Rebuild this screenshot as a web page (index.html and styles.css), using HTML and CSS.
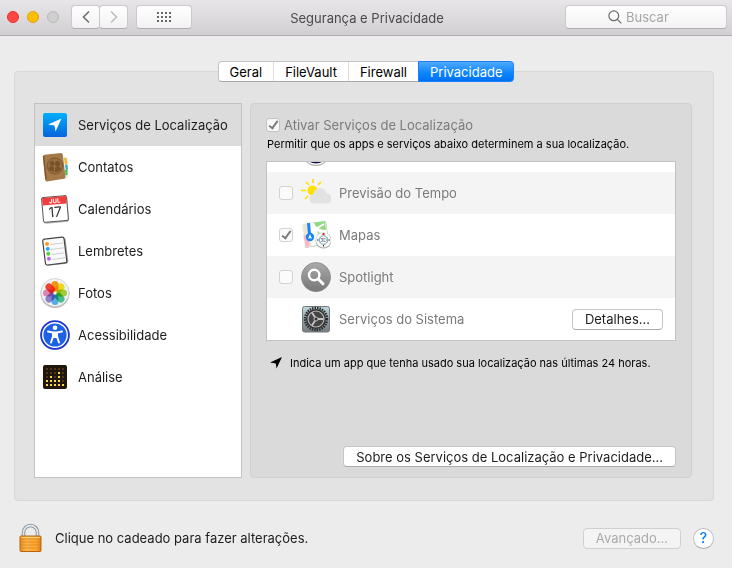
FILE: index.html
```html
<!DOCTYPE html>
<html lang="pt-BR">
<head>
	<meta charset="UTF-8">
	<meta name="viewport" content="width=device-width, initial-scale=1">
	<title>Segurança e Privacidade</title>
	<link rel="stylesheet" href="styles.css">
</head>
<body>

<header class="toolbar">
	<div class="toolbar-left">
		<div class="lights">
			<button type="button" class="light red" aria-label="Fechar"></button>
			<button type="button" class="light yellow" aria-label="Minimizar"></button>
			<button type="button" class="light off" aria-label="Zoom" disabled></button>
		</div>
		<div class="history">
			<button type="button" class="tool" aria-label="Voltar">
				<svg width="8" height="14" viewBox="0 0 8 14"><path d="M7 1.500 1.500 7 7 12.500" fill="none" stroke="#6e6e6e" stroke-width="1.600"/></svg>
			</button>
			<button type="button" class="tool" aria-label="Avançar" disabled>
				<svg width="8" height="14" viewBox="0 0 8 14"><path d="M1 1.500 6.500 7 1 12.500" fill="none" stroke="#bdbdbd" stroke-width="1.600"/></svg>
			</button>
		</div>
		<button type="button" class="tool all" aria-label="Mostrar tudo">
			<svg width="14" height="10" viewBox="0 0 14 10" fill="#666"><path d="M0 0h2v2H0zM4 0h2v2H4zM8 0h2v2H8zM12 0h2v2h-2zM0 4h2v2H0zM4 4h2v2H4zM8 4h2v2H8zM12 4h2v2h-2zM0 8h2v2H0zM4 8h2v2H4zM8 8h2v2H8zM12 8h2v2h-2z"/></svg>
		</button>
	</div>
	<h1 class="title">Segurança e Privacidade</h1>
	<label class="search">
		<svg width="14" height="14" viewBox="0 0 14 14" fill="none" stroke="#6c6c6c" stroke-width="1.200"><circle cx="5.800" cy="5.800" r="4.900"/><path d="m9.300 9.300 4 4"/></svg>
		<input type="text" placeholder="Buscar" aria-label="Buscar">
	</label>
</header>

<main>
	<nav class="tabs">
		<button type="button" class="tab">Geral</button>
		<button type="button" class="tab">FileVault</button>
		<button type="button" class="tab">Firewall</button>
		<button type="button" class="tab active">Privacidade</button>
	</nav>

	<section class="panel">
		<nav class="sidebar">
			<a href="#localizacao" class="item selected">
				<svg class="icon" viewBox="0 0 30 30">
					<defs><linearGradient id="blue" x2="0" y2="1"><stop offset="0" stop-color="#02b0fc"/><stop offset="1" stop-color="#0863dd"/></linearGradient></defs>
					<rect x="3" y="3" width="24" height="24" rx="2" fill="url(#blue)"/>
					<path d="m21.500 8.500-6 13-1-6-6.500-1z" fill="#fff"/>
				</svg>
				Serviços de Localização
			</a>
			<a href="#contatos" class="item">
				<svg class="icon" viewBox="0 0 30 30">
					<path d="m23 4 4 1 1 21-5 1z" fill="#eee"/>
					<path d="M24 6h2.500l1 6-2.500 1z" fill="#f2b52b"/>
					<path d="m25 13 2.500-.5.500 5-2 .5z" fill="#2daed7"/>
					<path d="m25 18 2.500-.5V23l-2 .5z" fill="#4ab84f"/>
					<path d="M3 4.500Q3 3 4.500 2.700L21 1q1.500 0 1.700 1.500L25.500 25q0 1.500-1.500 1.700L7 29.500q-1.500 0-1.800-1.500z" fill="#a47a49"/>
					<path d="m3.500 4 2.500 23" stroke="#805829" stroke-width="1.500"/>
					<circle cx="15" cy="14" r="8" fill="#98703f" stroke="#80592e"/>
					<g fill="#76522b"><circle cx="12" cy="11.500" r="2.400"/><circle cx="17.500" cy="11.500" r="2.600"/><path d="M8.500 17q1-3 3.500-3l2 1.500v4q-4 0-5.500-2.500zM15 20v-3q0-2.500 2.500-2.700 3 .2 3.700 2.700-2 3-6.200 3z"/></g>
				</svg>
				Contatos
			</a>
			<a href="#calendarios" class="item">
				<svg class="icon" viewBox="0 0 30 30">
					<g transform="rotate(-5 15 15)">
						<rect x="3" y="4" width="25" height="25" rx="2" fill="#bbb"/>
						<rect x="2.500" y="2.500" width="25" height="25" rx="2" fill="#fff" stroke="#555"/>
						<path d="M3 4q0-1 1-1h22q1 0 1 1v6.500H3z" fill="#f03d3d"/>
						<text x="15.500" y="9" class="month">JUL</text>
						<text x="15" y="23" class="day">17</text>
					</g>
				</svg>
				Calendários
			</a>
			<a href="#lembretes" class="item">
				<svg class="icon" viewBox="0 0 30 30">
					<g transform="rotate(-7 15 15)">
						<rect x="5" y="3" width="22" height="26" rx="2" fill="#aaa"/>
						<rect x="4" y="2" width="21.500" height="26" rx="2" fill="#fafafa" stroke="#454545" stroke-width="1.200"/>
						<path d="M11 8h13M11 13h13M11 18h13M11 23h13" stroke="#c7c7c7" stroke-width=".8"/>
						<circle cx="8" cy="7" r="2" fill="#ff9817"/><circle cx="8" cy="12" r="2" fill="#1eaff5"/><circle cx="8" cy="17" r="2" fill="#57cf3f"/><circle cx="8" cy="22" r="2" fill="#bd6ae0"/>
					</g>
				</svg>
				Lembretes
			</a>
			<a href="#fotos" class="item">
				<svg class="icon" viewBox="0 0 30 30">
					<circle cx="15" cy="15.500" r="14.500" fill="#b5b5b5"/>
					<circle cx="15" cy="14.500" r="14" fill="#f2f2f2" stroke="#ccc" stroke-width=".8"/>
					<g class="petals">
						<rect x="11.500" y="3" width="7" height="10.500" rx="3.500" fill="#ff9d18"/>
						<rect x="11.500" y="3" width="7" height="10.500" rx="3.500" fill="#f9e51c" transform="rotate(45 15 15)"/>
						<rect x="11.500" y="3" width="7" height="10.500" rx="3.500" fill="#a7d73d" transform="rotate(90 15 15)"/>
						<rect x="11.500" y="3" width="7" height="10.500" rx="3.500" fill="#4bc890" transform="rotate(135 15 15)"/>
						<rect x="11.500" y="3" width="7" height="10.500" rx="3.500" fill="#5bb8ee" transform="rotate(180 15 15)"/>
						<rect x="11.500" y="3" width="7" height="10.500" rx="3.500" fill="#9688d6" transform="rotate(225 15 15)"/>
						<rect x="11.500" y="3" width="7" height="10.500" rx="3.500" fill="#e58cc2" transform="rotate(270 15 15)"/>
						<rect x="11.500" y="3" width="7" height="10.500" rx="3.500" fill="#fc4438" transform="rotate(315 15 15)"/>
					</g>
				</svg>
				Fotos
			</a>
			<a href="#acessibilidade" class="item">
				<svg class="icon" viewBox="0 0 30 30">
					<circle cx="15" cy="15.500" r="14.500" fill="#aab0d5"/>
					<circle cx="15" cy="15" r="14.800" fill="#1d35cd"/>
					<circle cx="15" cy="15" r="12.300" fill="#1e61e5" stroke="#fff" stroke-width="1.400"/>
					<circle cx="15" cy="7.700" r="2.300" fill="#fff"/>
					<path d="m8 11.500 5 1v4L11 22.500M22 11.500l-5 1v4l2 6M13 12.500h4M14 13v4h2v-4" fill="none" stroke="#fff" stroke-width="2" stroke-linecap="round" stroke-linejoin="round"/>
				</svg>
				Acessibilidade
			</a>
			<a href="#analise" class="item">
				<svg class="icon" viewBox="0 0 30 30">
					<rect x="3" y="3" width="24" height="24" rx="2" fill="#21160c"/>
					<path d="M6 7h18M6 11h18M6 15h18M6 19h18" stroke="#54351b" stroke-width="2" stroke-dasharray="2 2"/>
					<path d="M6 19h6M14 19h2M18 19h4M6 23h18M18 11h2M18 15h2M10 15h2" stroke="#ffd83d" stroke-width="2" stroke-dasharray="2 2"/>
				</svg>
				Análise
			</a>
		</nav>

		<div class="content">
			<label class="enable">
				<input type="checkbox" class="check" checked disabled>
				Ativar Serviços de Localização
			</label>
			<p class="small">Permitir que os apps e serviços abaixo determinem a sua localização.</p>

			<div class="apps">
				<div class="app">
					<svg class="icon siri" viewBox="0 0 30 30"><circle cx="15" cy="15.500" r="14.500" fill="#aaa"/><circle cx="15" cy="15" r="14" fill="#fff"/><circle cx="15" cy="14.500" r="13" fill="#151445"/></svg>
				</div>
				<label class="app">
					<input type="checkbox" class="check" disabled>
					<svg class="icon" viewBox="0 0 30 30">
						<circle cx="11.500" cy="12.500" r="5" fill="#ffe000"/>
						<path d="M12 1v4M5 4l3 3M20 4l-3 3M0 12.500h5M4 21l3-3" stroke="#ffe000" stroke-width="1.700"/>
						<path d="M13 25.500a4.800 4.800 0 0 1-.5-9.500 6.600 6.600 0 0 1 13-.5 5 5 0 0 1 .5 10z" fill="#e2e2e2"/>
					</svg>
					Previsão do Tempo
				</label>
				<label class="app">
					<input type="checkbox" class="check" checked disabled>
					<svg class="icon" viewBox="0 0 30 30">
						<path d="m1 4 24-3 3 23-24 4z" fill="#aaa"/>
						<path d="m.5 3.500 24-3 3 23-24 4z" fill="#fbfbf7"/>
						<path d="m1.500 4.500 5-1 4 23-6 1z" fill="#ece6d6"/>
						<path d="m2.500 15 5 1 1 10-4 1z" fill="#f8b7c4"/>
						<path d="m12 2.500 12-1.500 1 9q-9 0-13-7.500z" fill="#91da82"/>
						<path d="m16 11 9 1v9l-7-1z" fill="#b6e5a8"/>
						<path d="m9 3 1 12M6 14l17-10M12 3q4 11 14 9" fill="none" stroke="#fff" stroke-width="2"/>
						<path d="m7.500 3 1 11" stroke="#1687f8" stroke-width="3"/>
						<circle cx="9" cy="17" r="4.200" fill="#1684f3"/><path d="m9 14 2 5-2-1-2 1z" fill="#fff"/>
						<circle cx="22.500" cy="20.500" r="8" fill="#aaa"/><circle cx="22.500" cy="20" r="7.500" fill="#fbfbfb"/><circle cx="22.500" cy="20" r="4.300" fill="#fff" stroke="#789ca9"/>
						<path d="M22.500 13v2" stroke="#e21f1f" stroke-width="2"/><path d="M22.500 25v1.500M16 20h1.500M27.500 20H29" stroke="#333"/>
						<text x="22.500" y="22" class="three">3D</text>
					</svg>
					Mapas
				</label>
				<label class="app">
					<input type="checkbox" class="check" disabled>
					<svg class="icon" viewBox="0 0 30 30">
						<defs><linearGradient id="gray" x2="0" y2="1"><stop offset="0" stop-color="#aaa"/><stop offset="1" stop-color="#777"/></linearGradient></defs>
						<circle cx="15" cy="15.500" r="14.500" fill="#c5c5c5"/>
						<circle cx="15" cy="15" r="14.500" fill="url(#gray)" stroke="#888" stroke-width=".8"/>
						<circle cx="13.200" cy="13" r="5.200" fill="none" stroke="#fff" stroke-width="2.400"/>
						<path d="m17.200 17 4.800 4.800" stroke="#fff" stroke-width="3" stroke-linecap="round"/>
					</svg>
					Spotlight
				</label>
				<div class="app">
					<svg class="icon system" viewBox="0 0 30 30">
						<defs><linearGradient id="steel" x2="0" y2="1"><stop offset="0" stop-color="#bdd7df"/><stop offset="1" stop-color="#747c80"/></linearGradient></defs>
						<rect x="1.500" y="2.500" width="27" height="25.500" rx="2" fill="url(#steel)" stroke="#777"/>
						<circle cx="15" cy="15" r="11" fill="none" stroke="#292929" stroke-width="2.500" stroke-dasharray="1.500 1"/>
						<circle cx="15" cy="15" r="10" fill="#303030"/>
						<circle cx="15" cy="15" r="8" fill="#444" stroke="#bbb" stroke-width="1.200"/>
						<path d="M15 15h7.500M15 15l-4-6.500M15 15l-4 6.500" stroke="#c6c6c6" stroke-width="1.800"/>
						<circle cx="15" cy="15" r="2" fill="#333" stroke="#bbb"/>
					</svg>
					Serviços do Sistema
					<button type="button" class="btn details">Detalhes...</button>
				</div>
			</div>

			<p class="small note">
				<svg width="12" height="12" viewBox="0 0 12 12"><path d="M12 0 6.500 11.500 5.800 6.500 0 5.500z"/></svg>
				Indica um app que tenha usado sua localização nas últimas 24 horas.
			</p>
			<button type="button" class="btn about">Sobre os Serviços de Localização e Privacidade...</button>
		</div>
	</section>
</main>

<footer class="footer">
	<button type="button" class="lock" aria-label="Cadeado">
		<svg width="24" height="30" viewBox="0 0 24 30">
			<defs><linearGradient id="gold"><stop offset="0" stop-color="#e9891c"/><stop offset=".3" stop-color="#ffb545"/><stop offset=".8" stop-color="#fda52d"/><stop offset="1" stop-color="#d87915"/></linearGradient></defs>
			<path d="M4.500 14V9.500a7 7 0 0 1 14 0V14" fill="none" stroke="#808991" stroke-width="3.500"/>
			<path d="M4.500 14V9.500a7 7 0 0 1 14 0V14" fill="none" stroke="#dfe5e9" stroke-width="1.800"/>
			<rect x="1" y="13" width="21" height="15.500" rx="1" fill="url(#gold)" stroke="#b96413"/>
			<path d="M2 16h19M2 19h19M2 22h19M2 25h19" stroke="#d98921" stroke-width=".8"/>
			<path d="M2 14.500h19" stroke="#ffd27c"/>
		</svg>
	</button>
	<p class="lock-text">Clique no cadeado para fazer alterações.</p>
	<button type="button" class="btn advanced" disabled>Avançado...</button>
	<button type="button" class="help" aria-label="Ajuda">?</button>
</footer>

</body>
</html>
```

FILE: styles.css
```css
*{
	box-sizing: border-box;
}
body{
	display: flex;
	flex-direction: column;
	min-height: 100vh;
	margin: 0;
	background: #ececec;
	color: #1c1c1c;
	font-family: Inter, "Liberation Sans", sans-serif;
	font-size: 13px;
	line-height: 16px;
}
button, input{
	font: inherit;
	color: inherit;
}
button{
	padding: 0;
}
p, h1{
	margin: 0;
}
svg{
	display: block;
	flex: none;
}

/* Title bar */
.toolbar{
	display: grid;
	grid-template-columns: 1fr auto 1fr;
	align-items: center;
	height: 36px;
	padding: 0 5px 2px 7px;
	background: linear-gradient(#e8e6e8, #d1cfd1);
	border-bottom: 1px solid #b0aeb0;
}
.toolbar-left{
	display: flex;
	align-items: center;
}
.lights{
	display: flex;
	gap: 8px;
	margin-right: 12px;
}
.light{
	width: 12px;
	height: 12px;
	border: 1px solid;
	border-radius: 50%;
}
.red{
	background: #ff4744;
	border-color: #e5302e;
}
.yellow{
	background: #ffbd04;
	border-color: #e3a014;
}
.off{
	background: #cecfce;
	border-color: #b9b9b9;
}
.history{
	display: flex;
	margin-right: 8px;
}
.tool{
	display: flex;
	align-items: center;
	justify-content: center;
	width: 29px;
	height: 24px;
	background: linear-gradient(#fefefe, #f2f2f2);
	border: 1px solid #cbc9cb;
	border-bottom-color: #b0aeb0;
	border-radius: 4px;
}
.tool + .tool{
	margin-left: -1px;
}
.all{
	width: 56px;
}
.title{
	color: #4a4a4a;
	font-size: 13px;
	font-weight: 400;
	padding-top: 3px;
}
.search{
	display: flex;
	align-items: center;
	justify-self: end;
	gap: 4px;
	width: 162px;
	height: 24px;
	padding-left: 42px;
	background: linear-gradient(#fefefe, #f3f3f3);
	border: 1px solid #cbc9cb;
	border-bottom-color: #b0aeb0;
	border-radius: 4px;
}
.search input{
	flex: 1;
	min-width: 0;
	padding: 0;
	border: 0;
	background: none;
	outline: none;
}
.search input::placeholder{
	color: #a6a6a6;
}

main{
	display: flex;
	flex: 1;
	flex-direction: column;
}
/* Tabs sit over the top edge of the panel */
.tabs{
	position: relative;
	display: flex;
	width: fit-content;
	margin: 25px auto -11px;
	background: #fff;
	border: 1px solid #c4c4c4;
	border-bottom-color: #a9a9a9;
	border-radius: 4px;
}
.tab{
	height: 19px;
	padding: 0 11px;
	background: none;
	border: 0;
	border-right: 1px solid #dedede;
	color: #000;
}
.tab.active{
	margin: -1px;
	height: 21px;
	background: linear-gradient(#4fa9fb, #0a84ff 60%, #0071f5);
	border: 1px solid #1a80f3;
	border-radius: 0 4px 4px 0;
	color: #fff;
}
.panel{
	display: flex;
	flex: 1;
	gap: 8px;
	margin: 0 18px 0 14px;
	padding: 31px 21px 22px 19px;
	background: #e3e3e3;
	border: 1px solid #d8d8d8;
	border-radius: 4px;
}

.sidebar{
	flex: none;
	width: 208px;
	background: #fff;
	border: 1px solid #c2c2c2;
}
.item{
	display: flex;
	align-items: center;
	gap: 8px;
	height: 42px;
	padding-left: 5px;
	color: #1c1c1c;
	text-decoration: none;
}
.selected{
	background: #dcdcdc;
}
.icon{
	width: 30px;
	height: 30px;
}
.month{
	fill: #fff;
	font-size: 6px;
	font-weight: 700;
	text-anchor: middle;
}
.day{
	fill: #333;
	font-size: 14px;
	text-anchor: middle;
}
.three{
	fill: #456;
	font-size: 5px;
	text-anchor: middle;
}
.petals rect{
	mix-blend-mode: multiply;
}

.content{
	display: flex;
	flex: 1;
	flex-direction: column;
	min-width: 0;
	padding: 13px 15px 10px;
	background: #dadada;
	border: 1px solid #d0d0d0;
	border-radius: 4px;
}
.enable{
	display: flex;
	align-items: center;
	gap: 4px;
	color: #7b7b7b;
}
.check{
	appearance: none;
	display: flex;
	justify-content: center;
	flex: none;
	width: 14px;
	height: 14px;
	margin: 0;
	background: #f7f7f7;
	border: 1px solid #c3c3c3;
	border-radius: 3px;
}
.check:checked::after{
	content: "";
	box-sizing: border-box;
	width: 5px;
	height: 10px;
	border: solid #7d7d7d;
	border-width: 0 2px 2px 0;
	transform: rotate(36deg);
}
.small{
	margin: 3px 0 9px 1px;
	color: #000;
	font-size: 11px;
}
/* The list is scrolled to its last row */
.apps{
	display: flex;
	flex-direction: column;
	justify-content: flex-end;
	height: 180px;
	overflow: hidden;
	background: #fff;
	border: 1px solid #c2c2c2;
}
.app{
	display: flex;
	flex: none;
	align-items: center;
	gap: 8px;
	height: 42px;
	padding: 0 12px;
	color: #7b7b7b;
}
.app:nth-child(even){
	background: #f4f4f4;
}
.app .check{
	background: #fbfbfb;
	border-color: #d2d2d2;
}
.siri, .system{
	margin-left: 22px;
}
.btn{
	height: 21px;
	padding: 0 12px;
	background: #fff;
	border: 1px solid #c6c6c6;
	border-bottom-color: #ababab;
	border-radius: 4px;
	color: #1c1c1c;
}
.details{
	margin-left: auto;
}
.note{
	display: flex;
	align-items: center;
	gap: 8px;
	margin: 14px 0 0 4px;
}
.about{
	align-self: flex-end;
	margin-top: auto;
}

.footer{
	display: flex;
	align-items: center;
	padding: 22px 18px 15px 19px;
}
.lock{
	margin-right: 12px;
	border: 0;
	background: none;
}
.lock-text{
	flex: 1;
}
.advanced{
	margin-right: 12px;
	background: #f4f4f4;
	border-color: #cfcfcf;
	color: #ababab;
}
.help{
	width: 21px;
	height: 21px;
	background: #fff;
	border: 1px solid #c0c0c0;
	border-bottom-color: #a9a9a9;
	border-radius: 50%;
	color: #0a7cff;
	font-size: 14px;
	font-weight: 500;
}
```
